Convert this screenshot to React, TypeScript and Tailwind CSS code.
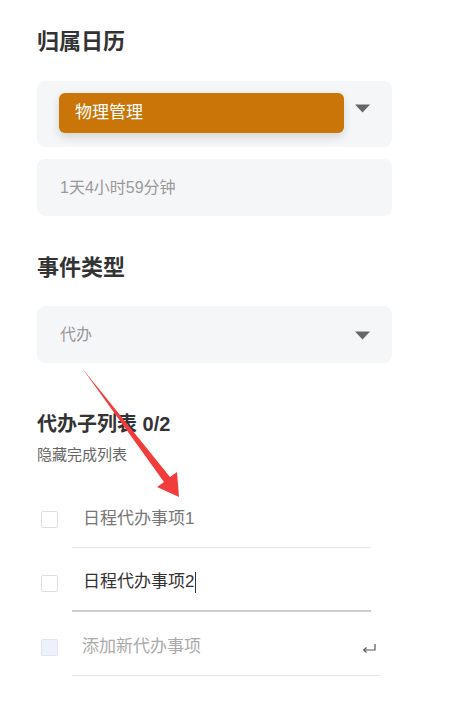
import React from "react";

const font = { fontFamily: '"Liberation Sans", "Noto Sans CJK SC", sans-serif' };

function Caret() {
  return (
    <svg width="15" height="9" viewBox="0 0 15 9" aria-hidden="true">
      <polygon points="0,0.5 15,0.5 7.5,8.5" fill="#666666" />
    </svg>
  );
}

function ReturnIcon() {
  return (
    <svg width="15" height="10" viewBox="0 0 15 10" fill="none" aria-hidden="true">
      <path d="M13 1v6H2" stroke="#555" strokeWidth="1.2" />
      <path d="M4.5 4.5L1.8 7l2.7 2.5" stroke="#555" strokeWidth="1.2" />
    </svg>
  );
}

function TodoRow({
  text,
  tone,
  line,
  editing,
  add,
}: {
  text: string;
  tone: string;
  line: string;
  editing?: boolean;
  add?: boolean;
}) {
  return (
    <div className="flex h-[64px]">
      <div className="w-[35px] flex items-center pt-[6px] pl-[4px]">
        <div
          className={
            add
              ? "w-[17px] h-[17px] rounded-[2px] border border-[#dfe4ef] bg-[#edf1fb]"
              : "w-[17px] h-[17px] rounded-[2px] border border-[#dcdfe6] bg-white"
          }
        />
      </div>
      <div
        className={`${add ? "w-[308px]" : "w-[299px]"} flex items-center pt-[6px] ${
          add ? "pl-[10px] pr-[3px]" : "pl-[11px]"
        } ${line}`}
      >
        <span className={`text-[17px] ${tone}`}>{text}</span>
        {editing && <span className="inline-block w-px h-[21px] bg-[#333] ml-px" />}
        {add && (
          <span className="ml-auto flex items-center pt-[2px]">
            <ReturnIcon />
          </span>
        )}
      </div>
    </div>
  );
}

export default function App() {
  return (
    <div className="relative w-[450px] min-h-[723px] bg-white" style={font}>
      <div className="ml-[37px] w-[355px] pt-[27px]">
        {/* 归属日历 */}
        <h2 className="text-[22px] font-bold leading-[30px] text-[#333]">归属日历</h2>

        <div className="mt-[24px] h-[66px] rounded-lg bg-[#f5f6f8] flex items-start pl-[22px] pr-[22px]">
          <div className="mt-[12px] w-[285px] h-[40px] rounded-[6px] bg-[#c97508] shadow-[0_4px_10px_rgba(0,0,0,0.14)] flex items-center pl-[16px]">
            <span className="text-[17px] text-white">物理管理</span>
          </div>
          <div className="ml-auto mt-[23px]">
            <Caret />
          </div>
        </div>

        <div className="mt-[12px] h-[57px] rounded-lg bg-[#f5f6f8] flex items-center pl-[23px]">
          <span className="text-[16px] text-[#999]">1天4小时59分钟</span>
        </div>

        {/* 事件类型 */}
        <h2 className="mt-[37px] text-[22px] font-bold leading-[30px] text-[#333]">事件类型</h2>

        <div className="mt-[23px] h-[57px] rounded-lg bg-[#f5f6f8] flex items-center pl-[23px] pr-[22px]">
          <span className="text-[16px] text-[#999]">代办</span>
          <div className="ml-auto pt-[1px]">
            <Caret />
          </div>
        </div>

        {/* 代办子列表 */}
        <h3 className="mt-[49px] text-[20px] font-bold leading-[24px] text-[#333]">代办子列表 0/2</h3>
        <p className="mt-[10px] text-[15px] leading-[18px] text-[#666]">隐藏完成列表</p>

        <div className="mt-[20px]">
          <TodoRow text="日程代办事项1" tone="text-[#777]" line="border-b border-[#e6e6e6]" />
          <TodoRow text="日程代办事项2" tone="text-[#333]" line="border-b-2 border-[#cfcfcf]" editing />
          <TodoRow text="添加新代办事项" tone="text-[#aaa]" line="border-b border-[#e6e6e6]" add />
        </div>
      </div>

      {/* annotation arrow */}
      <svg
        className="absolute inset-0 pointer-events-none"
        width="450"
        height="723"
        viewBox="0 0 450 723"
        aria-hidden="true"
      >
        <polygon
          points="82,368 170,477 177,472 179,497 157,487 164,482"
          fill="#f23c3c"
        />
      </svg>
    </div>
  );
}
